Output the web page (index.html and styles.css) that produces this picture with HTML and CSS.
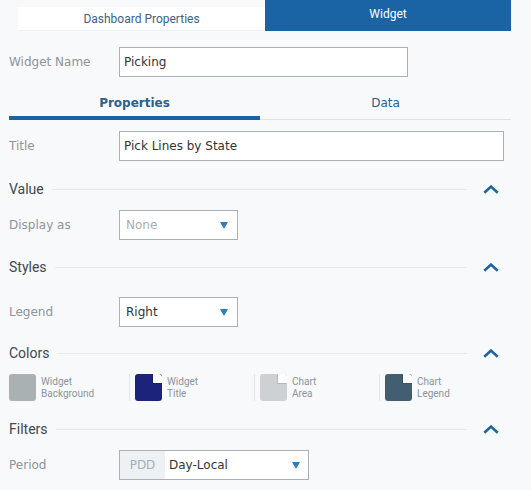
FILE: index.html
```html
<!DOCTYPE html>
<html>
<head>
<meta charset="utf-8">
<link rel="stylesheet" href="styles.css">
</head>
<body>
<div class="panel">
  <div class="top-tabs">
    <div class="top-tab">Dashboard Properties</div>
    <div class="top-tab active">Widget</div>
  </div>

  <div class="field mt-name">
    <div class="label">Widget Name</div>
    <div class="input w-name">Picking</div>
  </div>

  <div class="sub-tabs">
    <div class="sub-tab active">Properties</div>
    <div class="sub-tab">Data</div>
  </div>

  <div class="field mt-title">
    <div class="label">Title</div>
    <div class="input w-title">Pick Lines by State</div>
  </div>

  <div class="section-head mt-value">
    <span class="head-text">Value</span>
    <span class="rule"></span>
    <svg class="chev" width="16" height="9" viewBox="0 0 16 9"><polyline points="1.3,7.8 8,1.6 14.7,7.8" fill="none" stroke="#1f62a0" stroke-width="2.6"/></svg>
  </div>

  <div class="field mt-display">
    <div class="label">Display as</div>
    <div class="select w-small"><span class="placeholder">None</span><span class="caret"></span></div>
  </div>

  <div class="section-head mt-styles">
    <span class="head-text">Styles</span>
    <span class="rule"></span>
    <svg class="chev" width="16" height="9" viewBox="0 0 16 9"><polyline points="1.3,7.8 8,1.6 14.7,7.8" fill="none" stroke="#1f62a0" stroke-width="2.6"/></svg>
  </div>

  <div class="field mt-legend">
    <div class="label">Legend</div>
    <div class="select w-small"><span class="value">Right</span><span class="caret"></span></div>
  </div>

  <div class="section-head mt-colors">
    <span class="head-text">Colors</span>
    <span class="rule"></span>
    <svg class="chev" width="16" height="9" viewBox="0 0 16 9"><polyline points="1.3,7.8 8,1.6 14.7,7.8" fill="none" stroke="#1f62a0" stroke-width="2.6"/></svg>
  </div>

  <div class="colors mt-swatches">
    <div class="color-item">
      <span class="swatch sw-bg"></span>
      <span class="color-label">Widget<br>Background</span>
    </div>
    <div class="color-item">
      <span class="swatch sw-title corner"></span>
      <span class="color-label">Widget<br>Title</span>
    </div>
    <div class="color-item">
      <span class="swatch sw-area corner"></span>
      <span class="color-label">Chart<br>Area</span>
    </div>
    <div class="color-item">
      <span class="swatch sw-legend corner"></span>
      <span class="color-label">Chart<br>Legend</span>
    </div>
  </div>

  <div class="section-head mt-filters">
    <span class="head-text">Filters</span>
    <span class="rule"></span>
    <svg class="chev" width="16" height="9" viewBox="0 0 16 9"><polyline points="1.3,7.8 8,1.6 14.7,7.8" fill="none" stroke="#1f62a0" stroke-width="2.6"/></svg>
  </div>

  <div class="field mt-period">
    <div class="label">Period</div>
    <div class="select w-period addon-select">
      <span class="addon">PDD</span>
      <span class="value grow">Day-Local</span>
      <span class="caret"></span>
    </div>
  </div>
</div>
</body>
</html>
```

FILE: styles.css
```css
html, body {
  margin: 0;
  padding: 0;
  background: #f7f9fb;
}

.panel {
  width: 531px;
  height: 490px;
  padding: 0 20px 0 9px;
  box-sizing: border-box;
  font-family: "DejaVu Sans", Verdana, sans-serif;
  font-size: 12px;
  color: #333;
  overflow: hidden;
}

/* top tabs */
.top-tabs {
  display: flex;
  align-items: flex-end;
  height: 31px;
  margin-left: 9px;
}
.top-tab {
  width: 247px;
  height: 24px;
  line-height: 24px;
  box-sizing: border-box;
  background: #ffffff;
  border-bottom: 1px solid #edf0f3;
  text-align: center;
  font-family: Roboto, "Liberation Sans", sans-serif;
  font-size: 12px;
  color: #3e5f7f;
}
.top-tab.active {
  width: 246px;
  height: 31px;
  line-height: 29px;
  background: #1a64a6;
  border-bottom: none;
  color: #ffffff;
}

/* fields */
.field {
  display: flex;
  align-items: center;
  height: 30px;
}
.label {
  width: 110px;
  flex: none;
  color: #8d949b;
  font-size: 12px;
}
.input, .select {
  height: 30px;
  box-sizing: border-box;
  background: #ffffff;
  border: 1px solid #a9b1b8;
  display: flex;
  align-items: center;
  color: #333;
}
.input {
  padding: 0 4px;
}
.w-name { width: 289px; }
.w-title { width: 385px; }
.w-small { width: 119px; }
.w-period { width: 190px; }

.select {
  justify-content: space-between;
  padding: 0 9px 0 6px;
}
.placeholder { color: #a6adb3; }
.value { color: #333; }
.caret {
  width: 0;
  height: 0;
  border-left: 4px solid transparent;
  border-right: 4px solid transparent;
  border-top: 7px solid #2f7db8;
  margin-top: 1px;
}
.addon-select {
  padding: 0 8px 0 0;
}
.addon {
  width: 45px;
  height: 100%;
  background: #eef1f4;
  color: #a8afb5;
  display: flex;
  align-items: center;
  justify-content: center;
  flex: none;
}
.grow {
  flex: 1;
  padding-left: 4px;
}

/* sub tabs */
.sub-tabs {
  display: flex;
  margin-top: 11px;
}
.sub-tab {
  flex: 1;
  height: 32px;
  box-sizing: border-box;
  padding-top: 7px;
  line-height: 16px;
  text-align: center;
  color: #2a5f8f;
  border-bottom: 1px solid #dfe3e7;
}
.sub-tab.active {
  font-weight: bold;
  border-bottom: 4px solid #1a64a6;
}

/* section heads */
.section-head {
  display: flex;
  align-items: center;
  height: 20px;
}
.head-text {
  font-family: Roboto, "Liberation Sans", sans-serif;
  font-size: 14px;
  color: #40474f;
}
.rule {
  flex: 1;
  height: 1px;
  background: #e6eaed;
  margin: 0 16px 0 8px;
}
.chev {
  display: block;
  margin-right: 12px;
}

/* colors */
.colors {
  display: grid;
  grid-template-columns: 120px 125px 125px 1fr;
  height: 27px;
}
.color-item {
  display: flex;
  align-items: center;
  gap: 5px;
}
.color-item + .color-item {
  border-left: 1px solid #e3e7ea;
  padding-left: 5px;
}
.swatch {
  width: 27px;
  height: 27px;
  border-radius: 3px;
  flex: none;
  position: relative;
  overflow: hidden;
}
.corner::after {
  content: "";
  position: absolute;
  top: 0;
  right: 0;
  width: 9px;
  height: 9px;
  background: #ffffff;
  border-radius: 0 3px 0 0;
  box-shadow: -1px 1px 0 rgba(0, 0, 0, 0.12);
}
.sw-bg { background: #a9b1b3; }
.sw-title { background: #1b237b; }
.sw-area { background: #cdd1d4; }
.sw-legend { background: #435e71; }
.color-label {
  font-family: Roboto, "Liberation Sans", sans-serif;
  font-size: 10px;
  line-height: 12px;
  color: #8c949a;
}

/* vertical rhythm */
.mt-name { margin-top: 16px; }
.mt-title { margin-top: 11px; }
.mt-value { margin-top: 18px; }
.mt-display { margin-top: 11px; }
.mt-styles { margin-top: 17px; }
.mt-legend { margin-top: 20px; }
.mt-colors { margin-top: 16px; }
.mt-swatches { margin-top: 11px; }
.mt-filters { margin-top: 18px; }
.mt-period { margin-top: 11px; }
```
